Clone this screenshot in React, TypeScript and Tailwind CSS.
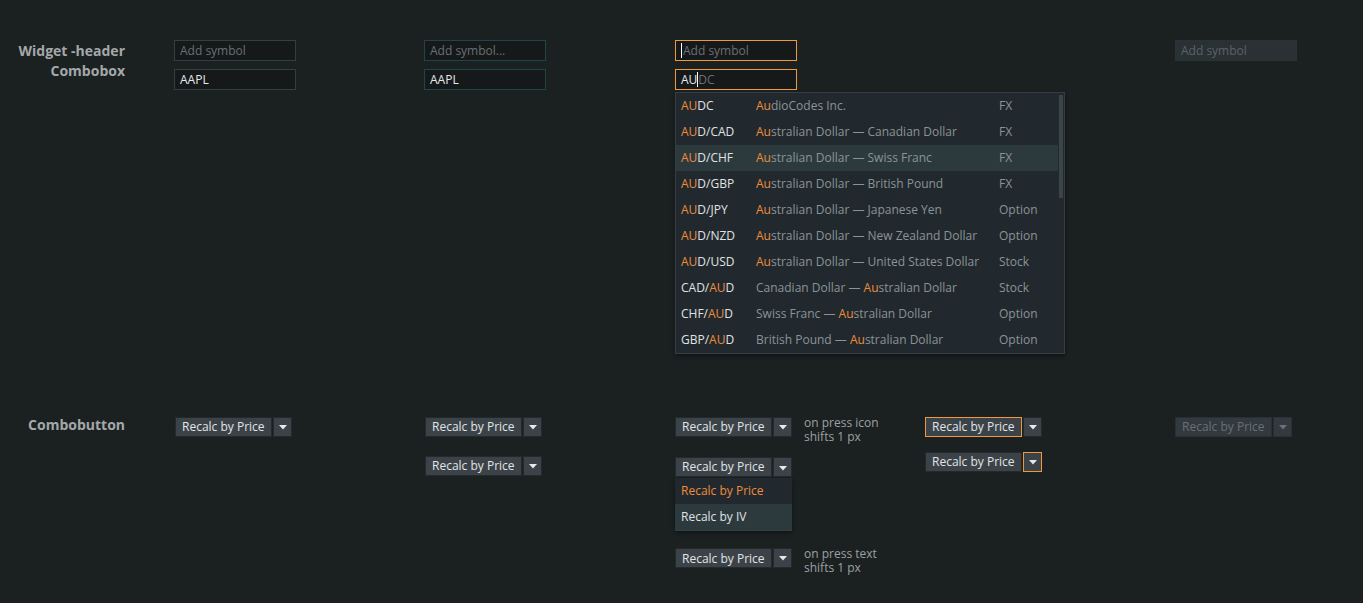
import React from 'react';

const font = { fontFamily: '"Open Sans", "Noto Sans", sans-serif' };

type Item = { sym: [string, string, string]; name: [string, string, string]; type: string };

const items: Item[] = [
  { sym: ['', 'AU', 'DC'], name: ['', 'Au', 'dioCodes Inc.'], type: 'FX' },
  { sym: ['', 'AU', 'D/CAD'], name: ['', 'Au', 'stralian Dollar — Canadian Dollar'], type: 'FX' },
  { sym: ['', 'AU', 'D/CHF'], name: ['', 'Au', 'stralian Dollar — Swiss Franc'], type: 'FX' },
  { sym: ['', 'AU', 'D/GBP'], name: ['', 'Au', 'stralian Dollar — British Pound'], type: 'FX' },
  { sym: ['', 'AU', 'D/JPY'], name: ['', 'Au', 'stralian Dollar — Japanese Yen'], type: 'Option' },
  { sym: ['', 'AU', 'D/NZD'], name: ['', 'Au', 'stralian Dollar — New Zealand Dollar'], type: 'Option' },
  { sym: ['', 'AU', 'D/USD'], name: ['', 'Au', 'stralian Dollar — United States Dollar'], type: 'Stock' },
  { sym: ['CAD/', 'AU', 'D'], name: ['Canadian Dollar — ', 'Au', 'stralian Dollar'], type: 'Stock' },
  { sym: ['CHF/', 'AU', 'D'], name: ['Swiss Franc — ', 'Au', 'stralian Dollar'], type: 'Option' },
  { sym: ['GBP/', 'AU', 'D'], name: ['British Pound — ', 'Au', 'stralian Dollar'], type: 'Option' },
];

const Caret = ({ color = '#e6e8ea' }: { color?: string }) => (
  <svg width="8" height="5" viewBox="0 0 8 5" className="block">
    <path d="M0 0 H8 L4 4.5 Z" fill={color} />
  </svg>
);

interface ComboProps {
  mainClass?: string;
  arrowClass?: string;
  textClass?: string;
  caretClass?: string;
  caretColor?: string;
  bg?: string;
}

const ComboButton: React.FC<ComboProps> = ({
  mainClass = 'border-[#23292d]',
  arrowClass = 'border-[#23292d]',
  textClass = 'text-[#e2e4e6]',
  caretClass = '',
  caretColor,
  bg = 'bg-[#3b4349]',
}) => (
  <div className="flex gap-px h-[20px] shrink-0">
    <div className={`h-full w-[97px] ${bg} border flex items-center px-[6px] text-[12px] ${mainClass} ${textClass}`}>
      <span className="leading-none whitespace-nowrap">Recalc by Price</span>
    </div>
    <div className={`h-full w-[19px] ${bg} border flex items-center justify-center ${arrowClass}`}>
      <span className={caretClass}><Caret color={caretColor} /></span>
    </div>
  </div>
);

const Input = ({
  value,
  placeholder,
  border = 'border-[#333e41]',
  bg = 'bg-[#15191a]',
  caretAt,
  ghost,
  phColor = 'text-[#6a7073]',
}: {
  value?: string;
  placeholder?: string;
  border?: string;
  bg?: string;
  caretAt?: boolean;
  ghost?: string;
  phColor?: string;
}) => (
  <div className={`w-[122px] h-[21px] shrink-0 border ${border} ${bg} flex items-center px-[5px] text-[12px] whitespace-nowrap`}>
    {caretAt && !value && <span className="w-px h-[15px] bg-white mr-px" />}
    {value ? (
      <span className="text-[#e6e8ea] flex items-center">
        {value}
        {caretAt && <span className="w-px h-[15px] bg-white" />}
        {ghost && <span className="text-[#6a7073]">{ghost}</span>}
      </span>
    ) : (
      <span className={phColor}>{placeholder}</span>
    )}
  </div>
);

const Note = ({ children }: { children: React.ReactNode }) => (
  <div className="text-[12px] leading-[14px] text-[#9ba0a3] ml-[12px] -mt-px whitespace-nowrap shrink-0">{children}</div>
);

export default function App() {
  return (
    <div className="min-h-[603px] w-full overflow-hidden bg-[#1b2021] pt-[40px]" style={font}>
      {/* Combobox section */}
      <div className="flex h-[377px]">
        <div className="w-[125px] shrink-0 text-right text-[14px] leading-[20px] font-bold text-[#a4a8aa] pt-px whitespace-nowrap">
          Widget -header
          <br />
          Combobox
        </div>
        <div className="ml-[49px] flex shrink-0">
          <div className="w-[250px] shrink-0 flex flex-col gap-[8px]">
            <Input placeholder="Add symbol" />
            <Input value="AAPL" />
          </div>
          <div className="w-[251px] shrink-0 flex flex-col gap-[8px]">
            <Input placeholder="Add symbol..." border="border-[#1e4648]" />
            <Input value="AAPL" border="border-[#1e4648]" />
          </div>
          <div className="w-[250px] shrink-0 flex flex-col gap-[8px] relative">
            <Input placeholder="Add symbol" border="border-[#f0983f]" caretAt />
            <Input value="AU" ghost="DC" border="border-[#f0983f]" caretAt />
            <div className="absolute left-0 top-[52px] w-[390px] h-[262px] bg-[#21292e] border border-[#343e43] z-10 shadow-[0_2px_4px_rgba(0,0,0,0.4)]">
              <div className="flex flex-col">
                {items.map((it, i) => (
                  <div
                    key={i}
                    className={`h-[26px] w-[382px] flex items-center text-[12px] whitespace-nowrap ${i === 2 ? 'bg-[#2c3a3e]' : ''}`}
                  >
                    <span className="w-[80px] shrink-0 pl-[5px] text-[#e0e2e4]">
                      {it.sym[0]}
                      <span className="text-[#ef8c3a]">{it.sym[1]}</span>
                      {it.sym[2]}
                    </span>
                    <span className="w-[243px] shrink-0 text-[#8c9397]">
                      {it.name[0]}
                      <span className="text-[#ef8c3a]">{it.name[1]}</span>
                      {it.name[2]}
                    </span>
                    <span className="text-[#8c9397]">{it.type}</span>
                  </div>
                ))}
              </div>
              <div className="absolute right-[1px] top-[2px] w-[4px] h-[103px] bg-[#3b4549]" />
            </div>
          </div>
          <div className="w-[250px] shrink-0" />
          <div className="w-[130px] shrink-0">
            <Input placeholder="Add symbol" border="border-[#2a3235]" bg="bg-[#293135]" phColor="text-[#5b6367]" />
          </div>
        </div>
      </div>

      {/* Combobutton section */}
      <div className="flex">
        <div className="w-[125px] shrink-0 text-right text-[14px] leading-[20px] font-bold text-[#a4a8aa] -mt-[2px]">
          Combobutton
        </div>
        <div className="ml-[50px] flex shrink-0">
          <div className="w-[250px] shrink-0">
            <ComboButton />
          </div>
          <div className="w-[250px] shrink-0 flex flex-col gap-[19px]">
            <ComboButton />
            <ComboButton />
          </div>
          <div className="w-[250px] shrink-0 flex flex-col">
            <div className="flex items-start">
              <ComboButton />
              <Note>
                on press icon
                <br />
                shifts 1 px
              </Note>
            </div>
            <div className="mt-[13px]">
              <ComboButton caretClass="block translate-y-px" />
              <div className="mt-px w-[117px] bg-[#21292e] border-b border-[#343e43] shadow-[0_2px_4px_rgba(0,0,0,0.4)]">
                <div className="h-[26px] flex items-center px-[6px] text-[12px] text-[#ef8c3a]">Recalc by Price</div>
                <div className="h-[26px] flex items-center px-[6px] text-[12px] text-[#e0e2e4] bg-[#2c3a3e]">Recalc by IV</div>
              </div>
            </div>
            <div className="flex items-start mt-[17px]">
              <ComboButton textClass="text-[#e2e4e6] pt-[2px]" />
              <Note>
                on press text
                <br />
                shifts 1 px
              </Note>
            </div>
          </div>
          <div className="w-[250px] shrink-0 flex flex-col gap-[15px]">
            <ComboButton mainClass="border-[#f0983f]" />
            <ComboButton arrowClass="border-[#f0983f]" />
          </div>
          <div className="w-[130px] shrink-0">
            <ComboButton
              bg="bg-[#323a3f]"
              mainClass="border-[#283034]"
              arrowClass="border-[#283034]"
              textClass="text-[#687075]"
              caretColor="#6a7277"
            />
          </div>
        </div>
      </div>
    </div>
  );
}
